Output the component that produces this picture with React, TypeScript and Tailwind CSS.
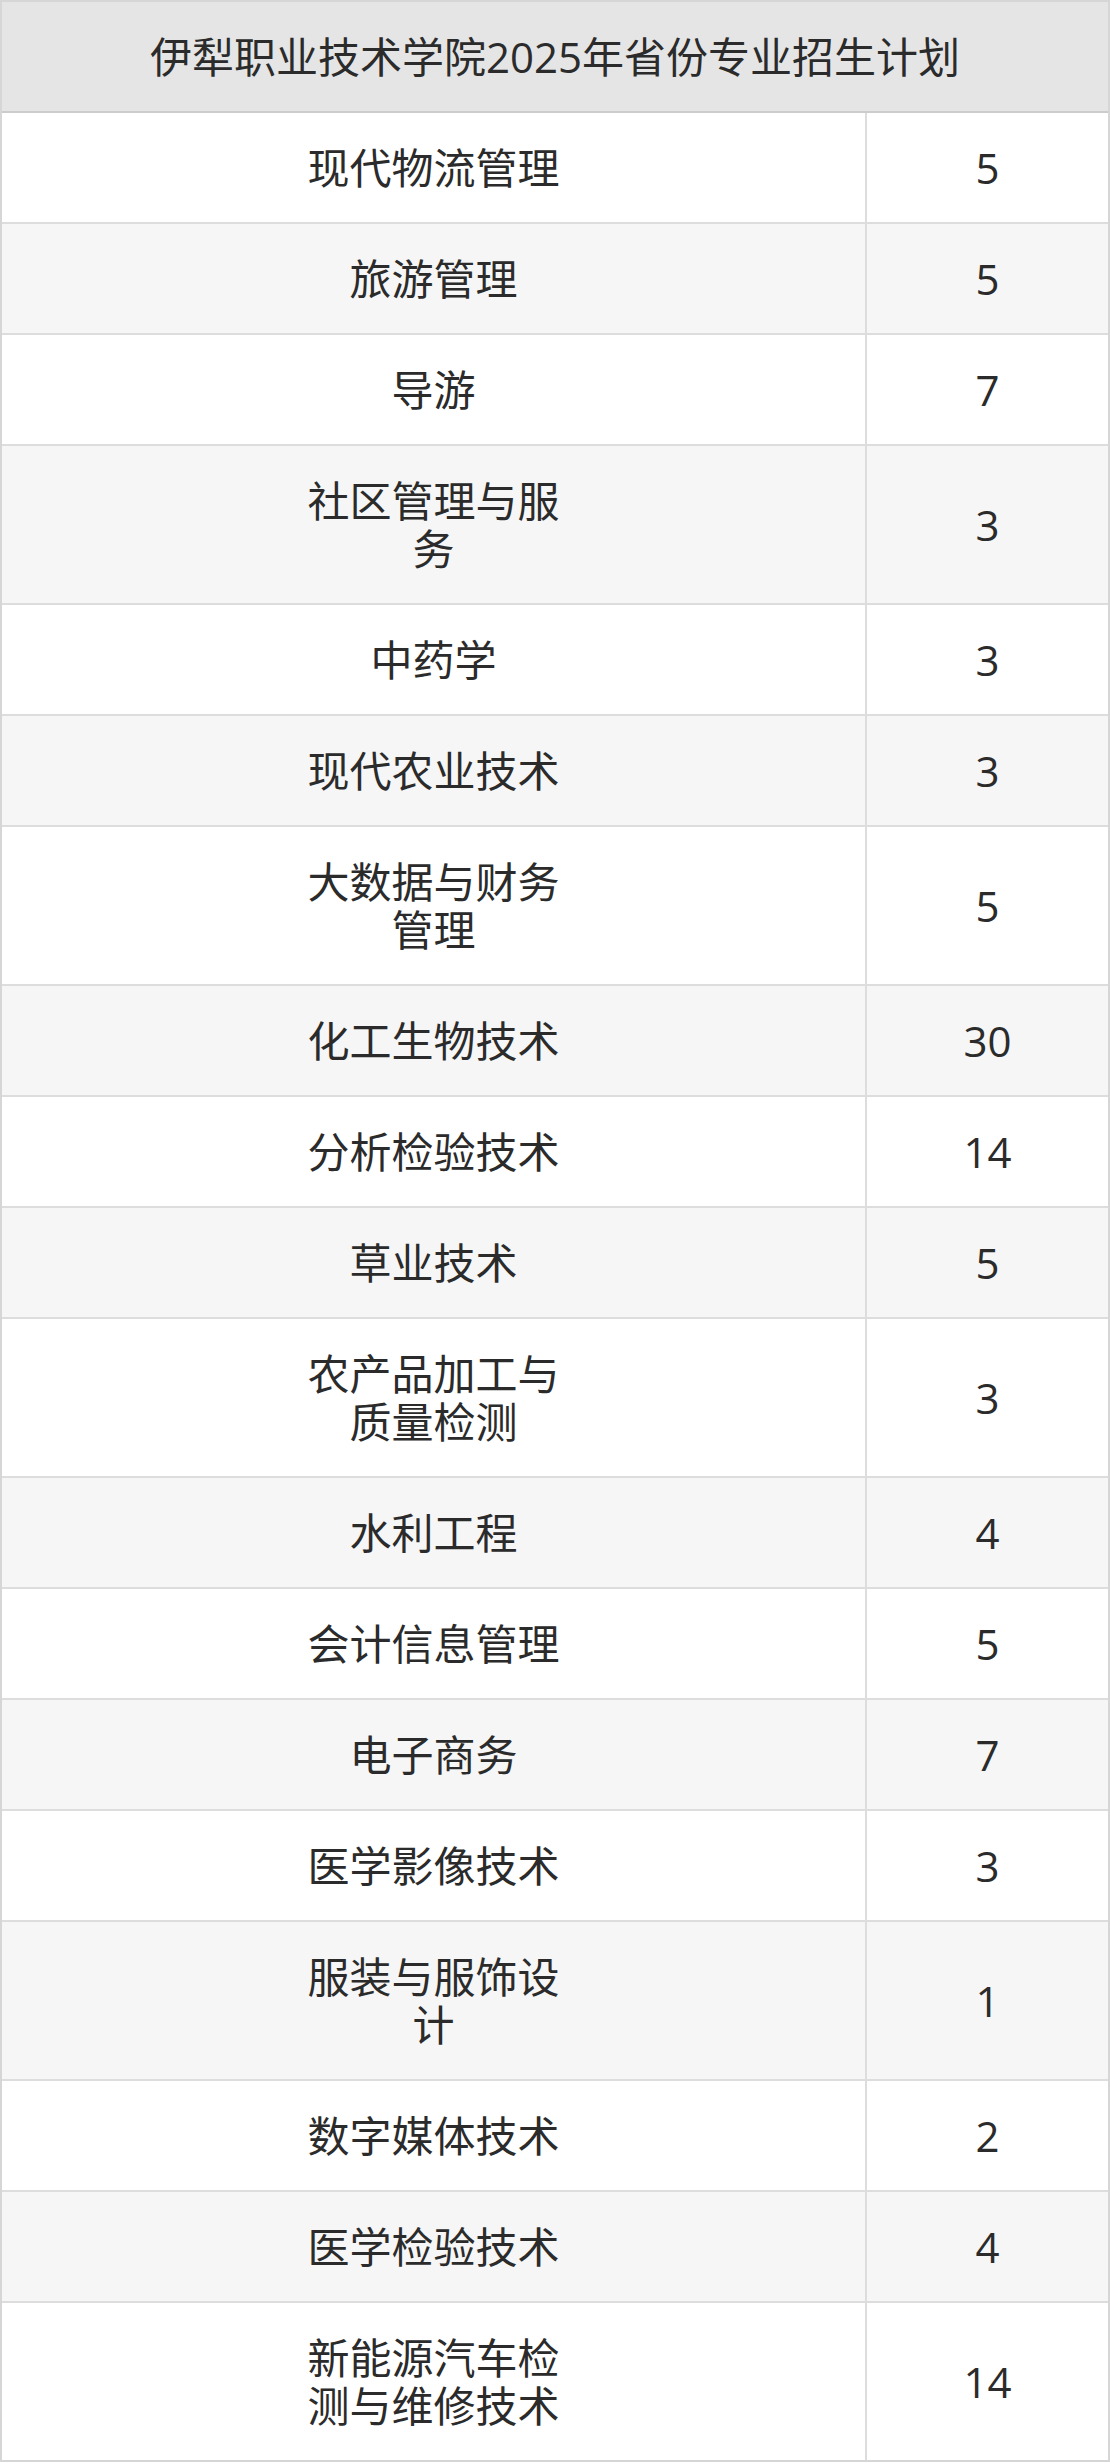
import React from "react";

const rows: [string, string][] = [
  ["现代物流管理", "5"],
  ["旅游管理", "5"],
  ["导游", "7"],
  ["社区管理与服务", "3"],
  ["中药学", "3"],
  ["现代农业技术", "3"],
  ["大数据与财务管理", "5"],
  ["化工生物技术", "30"],
  ["分析检验技术", "14"],
  ["草业技术", "5"],
  ["农产品加工与质量检测", "3"],
  ["水利工程", "4"],
  ["会计信息管理", "5"],
  ["电子商务", "7"],
  ["医学影像技术", "3"],
  ["服装与服饰设计", "1"],
  ["数字媒体技术", "2"],
  ["医学检验技术", "4"],
  ["新能源汽车检测与维修技术", "14"],
];

export default function App() {
  return (
    <div
      className="w-[1110px] bg-white text-[#2b2b2b] text-[42px] leading-[48px]"
      style={{ fontFamily: '"Open Sans", "Noto Sans CJK SC", sans-serif' }}
    >
      <div className="border-2 border-[#d6d6d6]">
        <div className="flex h-[111px] items-center justify-center border-b-2 border-[#cccccc] bg-[#e5e5e5]">
          伊犁职业技术学院2025年省份专业招生计划
        </div>
        {rows.map(([name, n], i) => (
          <div
            key={name}
            className={
              "flex border-b-2 border-[#dddddd] last:border-b-0 " +
              (i % 2 === 1 ? "bg-[#f6f6f6]" : "bg-white")
            }
          >
            <div className="flex w-[865px] min-h-[109px] items-center justify-center border-r-2 border-[#dddddd] py-[30.5px]">
              <div className="w-[270px] text-center">{name}</div>
            </div>
            <div className="flex flex-1 items-center justify-center">{n}</div>
          </div>
        ))}
      </div>
    </div>
  );
}
